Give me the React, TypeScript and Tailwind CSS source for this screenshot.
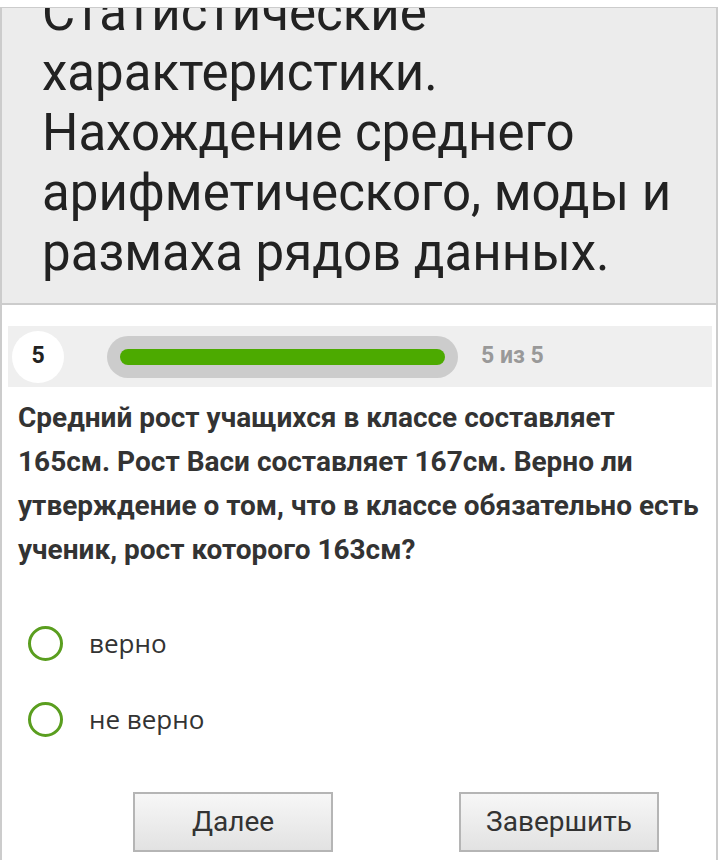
import React from "react";

export default function App() {
  return (
    <div className="w-[720px] h-[860px] bg-white overflow-hidden" style={{ fontFamily: "Roboto, 'Noto Sans', sans-serif" }}>
      <div className="h-[7px]" />
      <div className="w-[718px] h-[853px] border-l-2 border-r-2 border-t border-[#cccccc] flex flex-col">
        <div className="h-[297px] bg-[#ececec] border-b-2 border-[#cccccc] overflow-hidden pl-[40px] pr-[10px] shrink-0">
          <h1 className="mt-[-25px] text-[51px] leading-[60px] text-[#222222] font-normal">
            Статистические<br />характеристики.<br />Нахождение среднего<br />арифметического, моды и<br />размаха рядов данных.
          </h1>
        </div>
        <div className="mt-[21px] ml-[6px] mr-[4px] h-[61px] bg-[#efefef] flex items-center shrink-0">
          <div className="ml-[4px] w-[52px] h-[52px] rounded-full bg-white flex items-center justify-center text-[23px] font-bold text-[#222222]">
            5
          </div>
          <div className="ml-[43px] w-[351px] h-[42px] rounded-full bg-[#cccccc] flex items-center px-[13px]">
            <div className="w-full h-[16px] rounded-full bg-[#4caa00]" />
          </div>
          <div className="ml-[23px] text-[23px] font-bold text-[#999999]">5 из 5</div>
        </div>
        <div className="mt-[9px] pl-[16px] pr-[4px] text-[28px] leading-[44px] font-bold text-[#333333] whitespace-nowrap">
          Средний рост учащихся в классе составляет<br />165см. Рост Васи составляет 167см. Верно ли<br />утверждение о том, что в классе обязательно есть<br />ученик, рост которого 163см?
        </div>
        <div className="mt-[53px] flex flex-col gap-[40px] pl-[26px]" style={{ fontFamily: "'Open Sans', 'Noto Sans', sans-serif" }}>
          <label className="flex items-center h-[36px]">
            <span className="w-[35px] h-[35px] rounded-full border-[3px] border-[#5a9e1f] bg-white" />
            <span className="ml-[26px] text-[26px] text-[#333333]">верно</span>
          </label>
          <label className="flex items-center h-[36px]">
            <span className="w-[35px] h-[35px] rounded-full border-[3px] border-[#5a9e1f] bg-white" />
            <span className="ml-[26px] text-[26px] text-[#333333]">не верно</span>
          </label>
        </div>
        <div className="mt-[55px] flex pl-[131px] gap-[126px]">
          <button className="w-[200px] h-[60px] border-2 border-[#b5b5b5] bg-gradient-to-b from-[#f7f7f7] to-[#e2e2e2] text-[28px] text-[#333333]">
            Далее
          </button>
          <button className="w-[200px] h-[60px] border-2 border-[#b5b5b5] bg-gradient-to-b from-[#f7f7f7] to-[#e2e2e2] text-[28px] text-[#333333]">
            Завершить
          </button>
        </div>
      </div>
    </div>
  );
}
